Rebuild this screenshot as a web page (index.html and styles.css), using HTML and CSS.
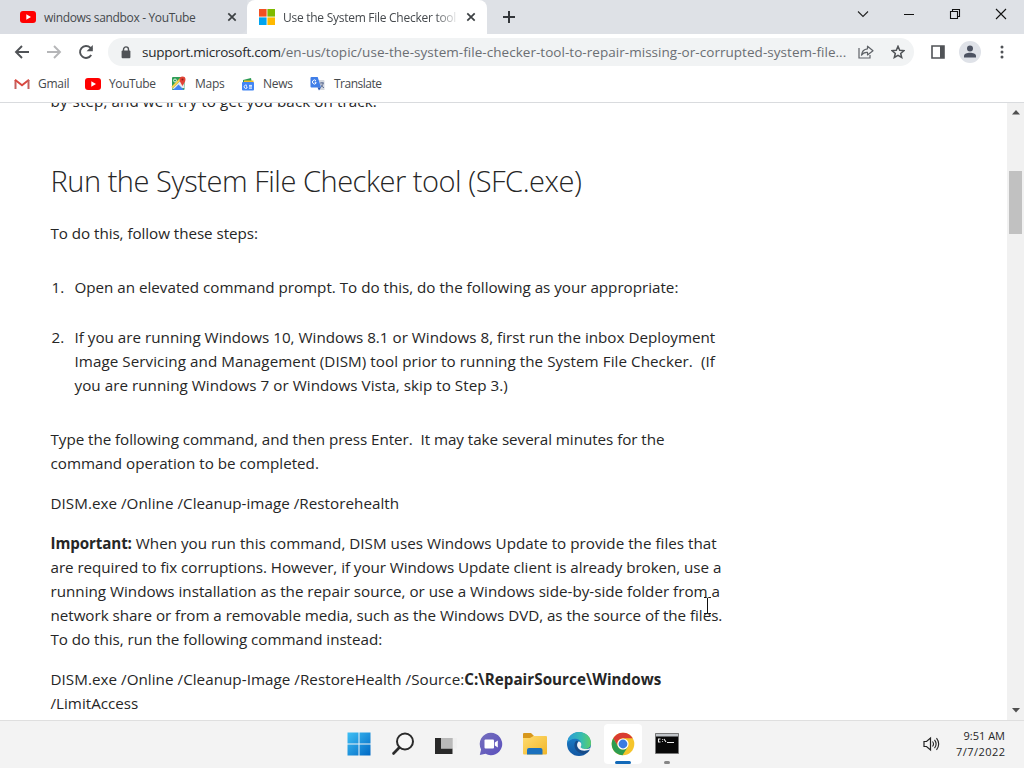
FILE: index.html
```html
<!DOCTYPE html>
<html lang="en">
<head>
<meta charset="utf-8">
<title>Use the System File Checker tool</title>
<link rel="stylesheet" href="styles.css">
</head>
<body>
<svg class="defs" width="0" height="0" aria-hidden="true">
  <symbol id="yt" viewBox="0 0 16 12"><rect width="16" height="12" rx="3" fill="#f00"/><path d="M6.3 3.3v5.4L11 6z" fill="#fff"/></symbol>
  <symbol id="close" viewBox="0 0 10 10"><path d="M1.3 1.3l7.4 7.4M8.7 1.3L1.3 8.7" stroke="#3c4043" stroke-width="1.7"/></symbol>
</svg>
<div class="window">
  <header class="tabstrip">
    <div class="tab tab-idle">
      <svg class="favicon" width="16" height="12"><use href="#yt"/></svg>
      <span class="tab-title t-one">windows sandbox - YouTube</span>
      <svg class="tab-close" width="10" height="10"><use href="#close"/></svg>
    </div>
    <div class="tab tab-active">
      <svg class="favicon" width="16" height="16"><path fill="#f25022" d="M0 0h7.6v7.6H0z"/><path fill="#7fba00" d="M8.4 0H16v7.6H8.4z"/><path fill="#00a4ef" d="M0 8.4h7.6V16H0z"/><path fill="#ffb900" d="M8.4 8.4H16V16H8.4z"/></svg>
      <span class="tab-title t-two">Use the System File Checker tool</span>
      <svg class="tab-close" width="10" height="10"><use href="#close"/></svg>
    </div>
    <svg class="plus" width="12" height="12"><path d="M6 0v12M0 6h12" stroke="#33363a" stroke-width="2"/></svg>
    <div class="controls">
      <svg width="12" height="12"><path d="M1 3.5l5 5 5-5" fill="none" stroke="#222" stroke-width="1.1"/></svg>
      <svg width="12" height="12"><path d="M1 6.5h10" stroke="#111"/></svg>
      <svg width="12" height="12"><path d="M1.5 3.5h7v7h-7zM3.5 3.5v-2h7v7h-2" fill="none" stroke="#111" stroke-width="1.1"/></svg>
      <svg width="12" height="12"><path d="M1 1l10 10M11 1L1 11" stroke="#111" stroke-width="1.1"/></svg>
    </div>
  </header>

  <nav class="toolbar">
    <svg class="nav-icon" width="16" height="16"><path d="M15 8H2M8 2L2 8l6 6" fill="none" stroke="#505357" stroke-width="1.9"/></svg>
    <svg class="nav-icon" width="16" height="16"><path d="M1 8h13M8 2l6 6-6 6" fill="none" stroke="#b5b6b8" stroke-width="1.9"/></svg>
    <svg class="nav-icon" width="16" height="16"><path d="M13.2 11A6 6 0 1 1 12.3 3.7L14 5.5" fill="none" stroke="#505357" stroke-width="1.9"/><path d="M14.8 1v6.2H8.6z" fill="#505357"/></svg>
    <div class="omnibox">
      <svg width="10" height="13"><path d="M2.5 5V3.4a2.5 2.5 0 0 1 5 0V5" fill="none" stroke="#505357" stroke-width="1.4"/><rect x=".6" y="4.6" width="8.8" height="7.6" rx="1" fill="#505357"/></svg>
      <span class="url"><span class="host">support.microsoft.com</span>/en-us/topic/use-the-system-file-checker-tool-to-repair-missing-or-corrupted-system-file...</span>
      <svg class="share" width="16" height="14"><path d="M1 3v10h11v-3" fill="none" stroke="#5f6368" stroke-width="1.2"/><path d="M9.5 1.2L15 5.7 9.5 10V7.4Q5.5 7 3.5 10.2 4 4.4 9.5 3.8z" fill="none" stroke="#5f6368" stroke-width="1.2" stroke-linejoin="round"/></svg>
      <svg class="star" width="14" height="14"><path d="M7 1.3l1.7 3.9 4.2.4-3.2 2.8 1 4.100L7 10.300l-3.700 2.200 1-4.100L1.100 5.600l4.200-.4z" fill="none" stroke="#505357" stroke-width="1.5"/></svg>
    </div>
    <svg class="panel" width="14" height="14"><path d="M1 1h12v12H1z" fill="#fff" stroke="#505357" stroke-width="1.6"/><path d="M9 1h4v12H9z" fill="#505357"/></svg>
    <span class="avatar"><svg width="22" height="22"><circle cx="11" cy="7.6" r="3" fill="#4d5362"/><path d="M5 16.5v-1.500c0-2.200 3-3.200 6-3.200s6 1 6 3.200v1.500z" fill="#4d5362"/></svg></span>
    <svg class="dots" width="4" height="14"><g fill="#505357"><circle cx="2" cy="2" r="1.5"/><circle cx="2" cy="7" r="1.5"/><circle cx="2" cy="12" r="1.5"/></g></svg>
  </nav>

  <nav class="bookmarks">
    <a class="bm bm-gmail"><svg width="16" height="12"><path d="M1.5 11V2" stroke="#c5605e" stroke-width="2"/><path d="M1 1.800l7 5.400 7-5.400" fill="none" stroke="#d9473f" stroke-width="2"/><path d="M14.5 11V2" stroke="#c5605e" stroke-width="2"/></svg><span>Gmail</span></a>
    <a class="bm bm-yt"><svg width="16" height="12"><use href="#yt"/></svg><span>YouTube</span></a>
    <a class="bm bm-maps"><svg width="15" height="15"><rect x="1" y="1" width="12.5" height="13" rx="1" fill="#2f9e57"/><path d="M1 13L12 2l1.500 10z" fill="#e8eaed"/><path d="M2 14l5.500-5.500L13 14z" fill="#4285f4"/><path d="M1 11.500L9.500 3" stroke="#fbd04a" stroke-width="2"/><path d="M11.500 10C10.500 7.500 8.500 6 8.500 3.400a3 3 0 0 1 6 0c0 2.600-2 4.100-3 6.600z" fill="#e24335"/><circle cx="11.5" cy="3.4" r="1" fill="#8e231b"/><circle cx="4" cy="4.5" r="1.5" fill="none" stroke="#fff" stroke-width=".8"/></svg><span>Maps</span></a>
    <a class="bm bm-news"><svg width="14" height="14"><path d="M2 3l8-2 1 5H2z" fill="#2c9b54"/><path d="M3 3.500h9.500V8H3z" fill="#f5bd27"/><rect x="1" y="5" width="12" height="8.5" rx="1" fill="#4285f4"/><path d="M6 8.500A1.700 1.700 0 1 0 6 11V9.800H5M8 8.400h3M8 9.800h3M8 11.200h3" fill="none" stroke="#fff" stroke-width=".9"/></svg><span>News</span></a>
    <a class="bm bm-tr"><svg width="15" height="15"><path d="M6 4h7.500a1 1 0 0 1 1 1v9H9z" fill="#d4d8df"/><path d="M1.500 1h6.200l3.300 10.500H1.500a1 1 0 0 1-1-1V2a1 1 0 0 1 1-1z" fill="#3f7ee8"/><path d="M7.500 11.500H11L9 14.500z" fill="#2455b8"/><path d="M6 4.700A2 2 0 1 0 6 7.300V6.200H4.700" fill="none" stroke="#fff"/><path d="M10 7h4M12 6v1M13 7c0 2-1 3.500-2.500 4.500M11 8.500c.5 1.500 1.500 2.500 3 3.200" fill="none" stroke="#5c6d93"/></svg><span>Translate</span></a>
  </nav>

  <main class="viewport">
    <article class="article">
      <p class="para intro"><span class="line l1">by-step, and we’ll try to get you back on track.</span></p>
      <h2 class="heading">Run the System File Checker tool (SFC.exe)</h2>
      <p class="para lead"><span class="line l2">To do this, follow these steps:</span></p>
      <div class="step"><span class="num">1.</span><p class="para"><span class="line l3">Open an elevated command prompt. To do this, do the following as your appropriate:</span></p></div>
      <div class="step"><span class="num">2.</span><p class="para"><span class="line l4">If you are running Windows 10, Windows 8.1 or Windows 8, first run the inbox Deployment</span><span class="line l5">Image Servicing and Management (DISM) tool prior to running the System File Checker.&nbsp; (If</span><span class="line l6">you are running Windows 7 or Windows Vista, skip to Step 3.)</span></p></div>
      <p class="para type"><span class="line l7">Type the following command, and then press Enter.&nbsp; It may take several minutes for the</span><span class="line l8">command operation to be completed.</span></p>
      <p class="para"><span class="line l9">DISM.exe /Online /Cleanup-image /Restorehealth</span></p>
      <p class="para"><span class="line l10"><b>Important:</b> When you run this command, DISM uses Windows Update to provide the files that</span><span class="line l11">are required to fix corruptions. However, if your Windows Update client is already broken, use a</span><span class="line l12">running Windows installation as the repair source, or use a Windows side-by-side folder from a</span><span class="line l13">network share or from a removable media, such as the Windows DVD, as the source of the files.</span><span class="line l14">To do this, run the following command instead:</span></p>
      <p class="para last"><span class="line l15">DISM.exe /Online /Cleanup-Image /RestoreHealth /Source:<b>C:\RepairSource\Windows</b></span><span class="line l16">/LimitAccess</span></p>
    </article>
    <div class="scrollbar">
      <svg class="up" width="8" height="5"><path d="M0 4.500L4 0l4 4.500z" fill="#505050"/></svg>
      <div class="thumb"></div>
      <svg class="down" width="8" height="5"><path d="M0 0l4 4.500L8 0z" fill="#505050"/></svg>
    </div>
    <svg class="cursor" width="9" height="17"><path d="M1 .5h2.500l1 .7 1-.7H8M4.500 1v15M1 16.500h2.500l1-.7 1 .7H8" fill="none" stroke="#111"/></svg>
  </main>

  <footer class="taskbar">
    <div class="apps">
      <span class="app"><svg width="24" height="24"><defs><linearGradient id="win" x2="1" y2="1"><stop stop-color="#3fc0f5"/><stop offset="1" stop-color="#0068c4"/></linearGradient></defs><path d="M.5.5h11v11H.5zM12.500.5h11v11h-11zM.5 12.500h11v11H.5zM12.500 12.500h11v11h-11z" fill="url(#win)"/></svg></span>
      <span class="app"><svg width="24" height="24"><circle cx="14" cy="9.5" r="8" fill="#f7f7f7" stroke="#2b2b2b" stroke-width="2"/><path d="M8.300 15.500L2.500 21.500" stroke="#2b2b2b" stroke-width="2.6" stroke-linecap="round"/></svg></span>
      <span class="app"><svg width="24" height="24"><path d="M0 6h17.500v16H0z" fill="#292929"/><path d="M6 6h16v10.500H6z" fill="#ededed" opacity=".8"/><path d="M6 6h11.500v10.500H6z" fill="#b9b9b9"/></svg></span>
      <span class="app"><svg width="24" height="24"><defs><linearGradient id="chat" x2="1" y2="1"><stop stop-color="#756fbd"/><stop offset="1" stop-color="#5b50bd"/></linearGradient></defs><path d="M12 .8a11.200 11.200 0 1 1-5.400 21L.8 23l1.300-5.600A11.200 11.200 0 0 1 12 .8z" fill="url(#chat)"/><rect x="5.5" y="7.5" width="9.5" height="9" rx="1" fill="#fff"/><path d="M15.800 10.500l3-2v7l-3-2z" fill="#fff"/></svg></span>
      <span class="app"><svg width="26" height="24"><defs><linearGradient id="fold" x2="1" y2="1"><stop stop-color="#ffdc70"/><stop offset="1" stop-color="#f1b629"/></linearGradient></defs><path d="M1 2q0-1 1-1h7l3 3-2 3H1z" fill="#d7971c"/><path d="M1 6h7l3.500-2H24q1 0 1 1v16.500q0 1-1 1H2q-1 0-1-1z" fill="url(#fold)"/><path d="M5 22.500V18q0-2 2-2h11.500q2 0 2 2v4.500z" fill="#1a70bd"/></svg></span>
      <span class="app"><svg width="26" height="26" viewBox="0 0 26 26"><defs><linearGradient id="edge" x2="1"><stop stop-color="#2a9bd9"/><stop offset=".6" stop-color="#36bdb0"/><stop offset="1" stop-color="#5dce68"/></linearGradient><linearGradient id="edgeb" y2="1" x2="0"><stop stop-color="#1d87cf"/><stop offset="1" stop-color="#1156a2"/></linearGradient></defs><circle cx="13" cy="13" r="12" fill="url(#edgeb)"/><path d="M1.200 12C2 5 7 1 13 1c7 0 12 5 12 11 0 4-3 6-6 6-3 0-5-1-4-2.500C16 13 15 9 11 8 7 7 3 9 1.200 12z" fill="url(#edge)"/><path d="M10.500 9.800C7 12 7.500 20 15 22.500c4 1.200 7-.5 8.700-3.500C19 21 12 19.500 11 15c-.5-2 .3-3.500 1.300-4.700z" fill="#174b88"/><path d="M12.500 10.500c-2 2-1.800 5 0 7 2.500 2.700 7.500 3 11.500.8L26 16c-3 2.600-8 2.600-10.500 1-1.400-.8-.6-1.500-.2-2.600.5-1.900-.8-3.900-2.800-3.900z" fill="#f3f3f3"/></svg></span>
      <span class="app app-open"><svg width="24" height="24" viewBox="0 0 24 24"><circle cx="12" cy="12" r="11.3" fill="#f5c52c"/><path d="M2.200 6.300A11.300 11.300 0 0 1 21.800 6.300H12A5.700 5.700 0 0 0 6.900 14.600z" fill="#d93c31"/><path d="M2.200 6.300A11.300 11.300 0 0 0 11.500 23.300L16.900 14.800A5.700 5.700 0 0 1 7 14.600z" fill="#2e9d50"/><circle cx="12" cy="12" r="5.6" fill="#fff"/><circle cx="12" cy="12" r="4.4" fill="#3b7be0"/></svg><i class="mark mark-active"></i></span>
      <span class="app"><svg width="24" height="22"><path d="M.5.5h23v20H.5z" fill="#080808"/><path d="M.5.5h23v3H.5z" fill="#c1c5c9"/><path d="M.5.5h23v20H.5z" fill="none" stroke="#777"/><path d="M5.500 6H3.500v3h2M7.500 6.200v.9M7.500 8.200v.9M9 6l2 3M12 9.500h7" fill="none" stroke="#eee" stroke-width="1.1"/></svg><i class="mark"></i></span>
    </div>
    <div class="tray">
      <svg width="17" height="16"><path d="M1 5.500h2.500l4-3.500v12l-4-3.500H1z" fill="none" stroke="#222" stroke-width="1.2"/><path d="M9.500 5.500q2 2.500 0 5M11.500 3.800q3.200 4.200 0 8.400M13.500 2.200q4.400 5.800 0 11.600" fill="none" stroke="#222" stroke-width="1.1"/></svg>
      <div class="clock"><span class="time">9:51 AM</span><span class="date">7/7/2022</span></div>
    </div>
  </footer>
</div>
</body>
</html>
```

FILE: styles.css
```css
* { box-sizing: border-box; }
body { margin: 0; font-family: "Open Sans", "Noto Sans", sans-serif; color: #262626; background: #fff; }
svg { display: block; flex: none; }
p, h2 { margin: 0; }
.defs { position: absolute; }
.window { width: 1024px; height: 768px; display: flex; flex-direction: column; overflow: hidden; }

.tabstrip { height: 34px; flex: none; display: flex; background: #dee1e6; }
.tab { height: 34px; display: flex; align-items: center; font-size: 12px; color: #45494d; white-space: nowrap; }
.tab-idle { width: 247px; padding: 0 10px 0 20px; background: #dadde3; border-bottom-right-radius: 8px; }
.tab-active { width: 240px; padding: 0 11px 0 12px; background: #fff; border-radius: 8px 8px 0 0; }
.tab-title { margin-left: 8px; flex: 1; letter-spacing: -0.33px; }
.t-two { letter-spacing: -0.27px; -webkit-mask-image: linear-gradient(90deg, #000 152px, transparent 176px); mask-image: linear-gradient(90deg, #000 152px, transparent 176px); }
.plus { margin: 11px 0 0 16px; }
.controls { margin: 8px 17px 0 auto; display: flex; gap: 34px; }

.toolbar { height: 36px; flex: none; display: flex; align-items: center; padding-left: 14px; background: #fff; }
.nav-icon { margin-right: 16px; }
.omnibox { width: 806px; flex: none; height: 28px; margin-left: -2px; padding: 0 0 0 13px; border-radius: 14px; background: #f1f3f4; display: flex; align-items: center; }
.url { width: 716px; flex: none; margin-left: 11px; font-size: 13.5px; letter-spacing: 0.04px; color: #6a6e73; white-space: nowrap; }
.host { color: #27292c; letter-spacing: -0.24px; }
.star { margin-left: 17px; }
.panel { margin-left: 17px; }
.avatar { margin-left: 14px; border-radius: 50%; background: #dfe2e8; }
.dots { margin-left: 19px; }

.bookmarks { height: 33px; flex: none; display: flex; align-items: center; padding: 0 0 5px 14px; border-bottom: 1px solid #d9dbde; font-size: 12px; letter-spacing: -0.25px; color: #45494d; }
.bm { display: flex; align-items: center; gap: 8px; white-space: nowrap; }
.bm-gmail { width: 71px; }
.bm-yt { width: 87px; letter-spacing: -0.4px; }
.bm-maps { width: 70px; gap: 9px; margin-left: -1px; }
.bm-news { width: 69px; }
.bm-tr { gap: 9px; letter-spacing: -0.5px; }

.viewport { height: 617px; flex: none; display: flex; position: relative; overflow: hidden; }
.article { flex: 1; margin-top: -14px; padding-left: 50.5px; font-size: 15.2px; line-height: 24px; }
.para { margin-bottom: 16px; }
.line { display: block; white-space: nowrap; }
.l1 { letter-spacing: 0.09px; }
.l2 { letter-spacing: -0.05px; }
.l3 { letter-spacing: -0.01px; }
.l4 { letter-spacing: 0.01px; }
.l5 { letter-spacing: 0.06px; }
.l6 { letter-spacing: 0.04px; }
.l7 { letter-spacing: -0.045px; }
.l9 { letter-spacing: 0.035px; }
.l10 { letter-spacing: 0.015px; }
.l10 b { letter-spacing: -0.12px; }
.l11 { letter-spacing: -0.05px; }
.l13 { letter-spacing: -0.04px; }
.l14 { letter-spacing: -0.035px; }
.l15 { letter-spacing: 0.04px; }
.heading { margin-top: 46px; height: 44px; line-height: 44px; font-size: 29px; font-weight: 300; letter-spacing: -0.47px; white-space: nowrap; }
.intro { margin-bottom: 0; }
.lead { margin: 18px 0 30px; }
.step { display: flex; margin-bottom: 10px; }
.num { width: 24px; padding-left: 1px; flex: none; }
.type { margin-top: 14px; }
.last { margin-bottom: 0; }
.scrollbar { width: 17px; background: #f1f1f1; display: flex; flex-direction: column; align-items: center; }
.up { margin-top: 7px; }
.thumb { width: 13px; height: 63px; margin-top: 56px; background: #c1c1c1; }
.down { margin: auto 0 7px; }
.cursor { position: absolute; left: 703px; top: 494px; }

.taskbar { height: 48px; flex: none; display: flex; justify-content: space-between; background: #f3f3f3; border-top: 1px solid #dfdfdf; }
.apps { display: flex; gap: 6px; padding: 3px 0 0 339.5px; }
.app { width: 38px; height: 40px; display: flex; align-items: center; justify-content: center; position: relative; border-radius: 4px; }
.app-open { background: #fff; }
.mark { position: absolute; bottom: 0; left: 16px; width: 6px; height: 3px; border-radius: 2px; background: #858585; }
.mark-active { left: 11px; width: 16px; background: #1269b8; }
.tray { display: flex; align-items: center; gap: 16px; padding: 0 19px 2px 0; }
.clock { display: flex; flex-direction: column; align-items: flex-end; font-size: 11px; line-height: 16px; white-space: nowrap; }
.date { letter-spacing: 0.45px; margin-right: -0.45px; }
```
